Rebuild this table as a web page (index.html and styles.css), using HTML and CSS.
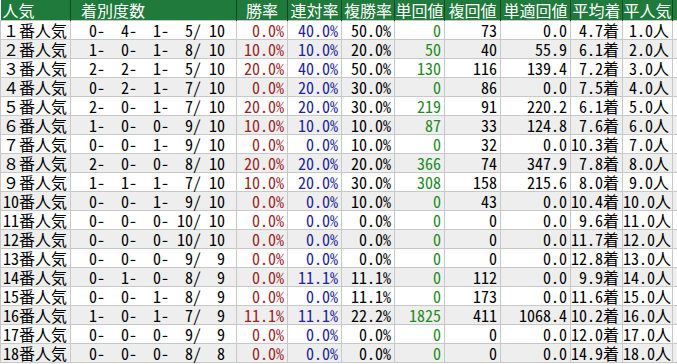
FILE: index.html
```html
<!DOCTYPE html>
<html lang="ja">
<head>
<meta charset="utf-8">
<title>人気別成績</title>
<link rel="stylesheet" href="styles.css">
</head>
<body>
<table class="stats">
<colgroup>
<col class="c-pop"><col class="c-rec"><col class="c-win"><col class="c-ren"><col class="c-fuku"><col class="c-tan"><col class="c-fkv"><col class="c-tt"><col class="c-avg"><col class="c-apop"><col class="c-pad">
</colgroup>
<thead>
<tr><th class="h-left">人気</th><th class="h-rec">着別度数</th><th>勝率</th><th>連対率</th><th>複勝率</th><th>単回値</th><th>複回値</th><th>単適回値</th><th>平均着</th><th>平人気</th><th class="h-pad"></th></tr>
</thead>
<tbody>
<tr><td class="pop">１番人気</td><td class="rec">  0-  4-  1-  5/ 10</td><td class="win">0.0%</td><td class="ren">40.0%</td><td>50.0%</td><td class="tan">0</td><td>73</td><td>0.0</td><td>4.7着</td><td>1.0人</td><td></td></tr>
<tr><td class="pop">２番人気</td><td class="rec">  1-  0-  1-  8/ 10</td><td class="win">10.0%</td><td class="ren">10.0%</td><td>20.0%</td><td class="tan">50</td><td>40</td><td>55.9</td><td>6.1着</td><td>2.0人</td><td></td></tr>
<tr><td class="pop">３番人気</td><td class="rec">  2-  2-  1-  5/ 10</td><td class="win">20.0%</td><td class="ren">40.0%</td><td>50.0%</td><td class="tan">130</td><td>116</td><td>139.4</td><td>7.2着</td><td>3.0人</td><td></td></tr>
<tr><td class="pop">４番人気</td><td class="rec">  0-  2-  1-  7/ 10</td><td class="win">0.0%</td><td class="ren">20.0%</td><td>30.0%</td><td class="tan">0</td><td>86</td><td>0.0</td><td>7.5着</td><td>4.0人</td><td></td></tr>
<tr><td class="pop">５番人気</td><td class="rec">  2-  0-  1-  7/ 10</td><td class="win">20.0%</td><td class="ren">20.0%</td><td>30.0%</td><td class="tan">219</td><td>91</td><td>220.2</td><td>6.1着</td><td>5.0人</td><td></td></tr>
<tr><td class="pop">６番人気</td><td class="rec">  1-  0-  0-  9/ 10</td><td class="win">10.0%</td><td class="ren">10.0%</td><td>10.0%</td><td class="tan">87</td><td>33</td><td>124.8</td><td>7.6着</td><td>6.0人</td><td></td></tr>
<tr><td class="pop">７番人気</td><td class="rec">  0-  0-  1-  9/ 10</td><td class="win">0.0%</td><td class="ren">0.0%</td><td>10.0%</td><td class="tan">0</td><td>32</td><td>0.0</td><td>10.3着</td><td>7.0人</td><td></td></tr>
<tr><td class="pop">８番人気</td><td class="rec">  2-  0-  0-  8/ 10</td><td class="win">20.0%</td><td class="ren">20.0%</td><td>20.0%</td><td class="tan">366</td><td>74</td><td>347.9</td><td>7.8着</td><td>8.0人</td><td></td></tr>
<tr><td class="pop">９番人気</td><td class="rec">  1-  1-  1-  7/ 10</td><td class="win">10.0%</td><td class="ren">20.0%</td><td>30.0%</td><td class="tan">308</td><td>158</td><td>215.6</td><td>8.0着</td><td>9.0人</td><td></td></tr>
<tr><td class="pop">10番人気</td><td class="rec">  0-  0-  1-  9/ 10</td><td class="win">0.0%</td><td class="ren">0.0%</td><td>10.0%</td><td class="tan">0</td><td>43</td><td>0.0</td><td>10.4着</td><td>10.0人</td><td></td></tr>
<tr><td class="pop">11番人気</td><td class="rec">  0-  0-  0- 10/ 10</td><td class="win">0.0%</td><td class="ren">0.0%</td><td>0.0%</td><td class="tan">0</td><td>0</td><td>0.0</td><td>9.6着</td><td>11.0人</td><td></td></tr>
<tr><td class="pop">12番人気</td><td class="rec">  0-  0-  0- 10/ 10</td><td class="win">0.0%</td><td class="ren">0.0%</td><td>0.0%</td><td class="tan">0</td><td>0</td><td>0.0</td><td>11.7着</td><td>12.0人</td><td></td></tr>
<tr><td class="pop">13番人気</td><td class="rec">  0-  0-  0-  9/  9</td><td class="win">0.0%</td><td class="ren">0.0%</td><td>0.0%</td><td class="tan">0</td><td>0</td><td>0.0</td><td>12.8着</td><td>13.0人</td><td></td></tr>
<tr><td class="pop">14番人気</td><td class="rec">  0-  1-  0-  8/  9</td><td class="win">0.0%</td><td class="ren">11.1%</td><td>11.1%</td><td class="tan">0</td><td>112</td><td>0.0</td><td>9.9着</td><td>14.0人</td><td></td></tr>
<tr><td class="pop">15番人気</td><td class="rec">  0-  0-  1-  8/  9</td><td class="win">0.0%</td><td class="ren">0.0%</td><td>11.1%</td><td class="tan">0</td><td>173</td><td>0.0</td><td>11.6着</td><td>15.0人</td><td></td></tr>
<tr><td class="pop">16番人気</td><td class="rec">  1-  0-  1-  7/  9</td><td class="win">11.1%</td><td class="ren">11.1%</td><td>22.2%</td><td class="tan">1825</td><td>411</td><td>1068.4</td><td>10.2着</td><td>16.0人</td><td></td></tr>
<tr><td class="pop">17番人気</td><td class="rec">  0-  0-  0-  9/  9</td><td class="win">0.0%</td><td class="ren">0.0%</td><td>0.0%</td><td class="tan">0</td><td>0</td><td>0.0</td><td>12.0着</td><td>17.0人</td><td></td></tr>
<tr><td class="pop">18番人気</td><td class="rec">  0-  0-  0-  8/  8</td><td class="win">0.0%</td><td class="ren">0.0%</td><td>0.0%</td><td class="tan">0</td><td>0</td><td>0.0</td><td>14.9着</td><td>18.0人</td><td></td></tr>
</tbody>
</table>
</body>
</html>
```
FILE: styles.css
```css
html, body {
  margin: 0;
  padding: 0;
  background: #ffffff;
}
body {
  font-family: "Noto Sans Mono CJK JP", "Noto Sans CJK JP", monospace;
  font-size: 16px;
  color: #000;
}
.stats {
  border-collapse: collapse;
  table-layout: fixed;
  width: 677px;
}
.c-pop { width: 70px; }
.c-rec { width: 166px; }
.c-win { width: 51px; }
.c-ren { width: 54px; }
.c-fuku { width: 53px; }
.c-tan { width: 50px; }
.c-fkv { width: 56px; }
.c-tt { width: 70px; }
.c-avg { width: 52px; }
.c-apop { width: 50px; }
.c-pad { width: 5px; }

.stats th {
  background: #1f7a3b;
  color: #fff;
  font-weight: normal;
  height: 20px;
  line-height: 20px;
  padding: 0;
  text-align: center;
  border-right: 1px solid #0f4a22;
  white-space: nowrap;
}
.stats th.h-left { text-align: left; padding-left: 2px; }
.stats th.h-rec { text-align: left; padding-left: 10px; }
.stats th.h-pad { border-right: none; }

.stats td {
  height: 18px;
  line-height: 18px;
  padding: 0 3px 0 0;
  border: 1px solid #c8c8c8;
  text-align: right;
  white-space: pre;
}
.stats tbody tr:nth-child(even) td { background: #eeeeee; }
.stats td.pop { text-align: left; padding: 0 0 0 2px; }
.stats td.rec { padding-right: 11px; }
.stats td.win { color: #9a2424; }
.stats td.ren { color: #22229a; }
.stats td.tan { color: #228a22; }
```
